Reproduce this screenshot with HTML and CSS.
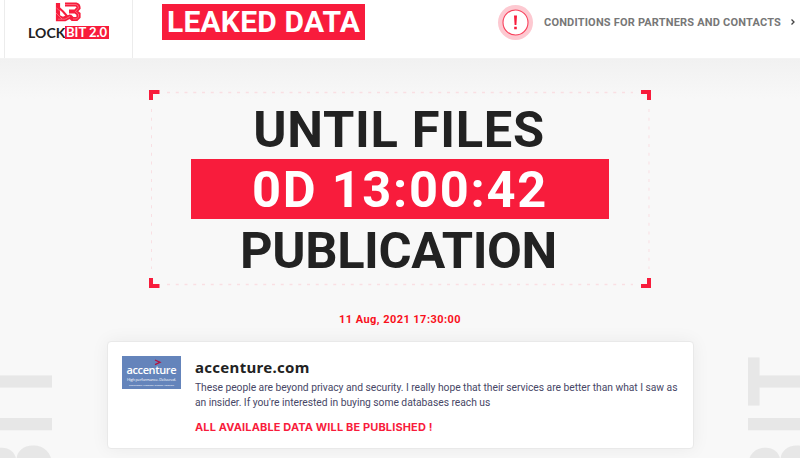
FILE: index.html
```html
<!DOCTYPE html>
<html lang="en">
<head>
<meta charset="utf-8">
<title>Leaked data</title>
<link rel="stylesheet" href="styles.css">
</head>
<body>
<header class="header">
  <div class="brand">
    <svg class="mark" width="27" height="21" viewBox="0 0 27 21">
      <path d="M3 2V18.200H10L16 15M10 3.500H21Q23.500 4 23.500 7L20.500 10.500L23.500 13V16L21.500 18H17.500L14.500 15M14 10.500H20.500" fill="none" stroke="#f81c3c" stroke-width="4.200"/>
      <path d="M2 5L8 10.500L12 15L8 17L4 15" fill="none" stroke="#f81c3c" stroke-width="2"/>
      <path d="M1.500 7L6 11M1 12L7 18M3 18.200H10L15 15.500M10 3.500H21Q23.500 4 23.500 7L20.500 10.500L23.500 13V16L21.500 18H18" fill="none" stroke="#fff" stroke-opacity=".45" stroke-width=".7"/>
    </svg>
    <div class="wordmark"><span class="lock">LOCK</span><span class="bit">BIT 2.0</span></div>
  </div>
  <h1 class="title"><span>LEAKED DATA</span></h1>
  <a class="conditions"><span class="alert"><svg width="27" height="27" viewBox="0 0 27 27"><circle cx="13.5" cy="13.5" r="12.5" fill="#fff" stroke="#f8405b" stroke-width="1.1"/><path d="M12 6.5H15L14.4 16H12.6ZM12.2 17.8H14.8V20.2H12.2Z" fill="#f81c3c"/></svg></span><span class="conditions-text">CONDITIONS FOR PARTNERS AND CONTACTS</span><svg class="chevron" width="4" height="6" viewBox="0 0 4 6"><path d="M.5 .5L3 3L.5 5.5" fill="none" stroke="#444" stroke-width="1.3"/></svg></a>
</header>
<main class="main">
  <svg class="watermark left" width="60" height="110" viewBox="0 0 60 110"><text transform="translate(52 110) rotate(-90) scale(.87 1)" x="-13 39 88" y="0">BIT</text></svg>
  <svg class="watermark right" width="60" height="110" viewBox="0 0 60 110"><text transform="translate(76 110) rotate(-90) scale(.87 1)" x="-13 39 88" y="0">BIT</text></svg>
  <section class="countdown">
    <svg class="frame" width="502" height="197" viewBox="0 0 502 197">
      <path d="M18 2.5H484M18 194.5H484" fill="none" stroke="#f9dfe3" stroke-width="1.4" stroke-dasharray="3 5.75"/>
      <path d="M2.5 19V179M500 19V179" fill="none" stroke="#f9dfe3" stroke-width="1" stroke-dasharray="3 5.75"/>
      <path d="M2 10V2H10.500M492 2H500V10M2 188V196H10.500M492 196H500V188" fill="none" stroke="#f81c3c" stroke-width="4"/>
    </svg>
    <div class="line"><span class="until">UNTIL FILES</span></div>
    <div class="line time"><span class="clock">0D 13:00:42</span></div>
    <div class="line"><span class="publication">PUBLICATION</span></div>
  </section>
  <div class="date"><span>11 Aug, 2021 17:30:00</span></div>
  <article class="card">
    <div class="thumb">
      <svg width="59" height="33" viewBox="0 0 59 33"><path d="M33 4L38 6.300L33 8.600" fill="none" stroke="#b3123e" stroke-width="1.3"/>
      <text class="thumb-name" x="4.500" y="18" textLength="50">accenture</text>
      <text class="thumb-tag" x="5" y="24.500" textLength="49">High performance. Delivered.</text>
      <text class="thumb-note" x="7" y="30" textLength="45">Designation: Customer Support Associate</text></svg>
    </div>
    <div class="copy">
      <h2><span>accenture.com</span></h2>
      <p><span class="copy-one">These people are beyond privacy and security. I really hope that their services are better than what I saw as</span><br><span class="copy-two">an insider. If you're interested in buying some databases reach us</span></p>
      <strong><span>ALL AVAILABLE DATA WILL BE PUBLISHED !</span></strong>
    </div>
  </article>
</main>
</body>
</html>
```
FILE: styles.css
```css
* { box-sizing: border-box; }
body { margin: 0; width: 800px; height: 458px; overflow: hidden; background: #f8f8f8; font-family: Roboto, sans-serif; color: #222; }
h1, h2, p { margin: 0; }
.header { height: 59px; background: #fff; display: flex; border-bottom: 1px solid #f3f3f3; white-space: nowrap; }
.brand { width: 129px; margin-left: 4px; border-left: 1px solid #ececec; border-right: 1px solid #ececec; padding-top: 1px; display: flex; flex-direction: column; align-items: center; }
.mark { display: block; }
.wordmark { margin-top: 4px; display: flex; height: 14px; line-height: 14px; font-family: Lato, sans-serif; font-weight: 700; font-size: 14px; }
.lock { width: 37px; letter-spacing: .1px; }
.bit { width: 44px; height: 13px; line-height: 13px; padding-left: 1px; background: #f81c3c; color: #fff; font-size: 13px; }
.title { margin: 4px 0 0 29px; width: 203px; height: 36px; background: #f81c3c; color: #fff; font-size: 30px; line-height: 36px; padding-left: 5px; font-weight: 700; letter-spacing: .2px; }
.conditions { display: flex; align-items: center; margin-left: 133px; height: 44px; color: #777; font-size: 11px; font-weight: 700; }
.alert { display: flex; align-items: center; justify-content: center; width: 35px; height: 35px; border-radius: 50%; background: #fdc9d1; }
.conditions-text { width: 247px; margin-left: 11px; letter-spacing: .19px; }
.main { position: relative; height: 399px; padding-top: 31px; background: linear-gradient(#f1f1f1 0, #f8f8f8 40px); }
.watermark { position: absolute; bottom: 0; font: 700 93px Inter, sans-serif; fill: #e7e7e7; text-anchor: middle; }
.left { left: 0; }
.right { right: 0; }
.countdown { position: relative; width: 502px; height: 198px; margin: 0 auto; padding: 9px 42px 0; }
.frame { position: absolute; left: 0; top: 0; overflow: visible; }
.line { position: relative; height: 60px; line-height: 62px; text-align: center; font-weight: 700; font-size: 50.6px; white-space: nowrap; }
.until { letter-spacing: .7px; margin-right: 2px; }
.clock { letter-spacing: 1.7px; }
.publication { letter-spacing: -.4px; margin-right: 3px; }
.time { margin-bottom: 1px; background: #f81c3c; color: #fff; }
.date { margin-top: 25px; height: 14px; line-height: 14px; text-align: center; color: #f9111c; font-size: 11px; font-weight: 700; letter-spacing: .45px; }
.card { position: relative; display: flex; width: 587px; height: 108px; margin: 14px 0 0 107px; padding: 14px; background: #fff; border: 1px solid #e9e9e9; border-radius: 4px; box-shadow: 0 0 18px rgba(0, 0, 0, .06); white-space: nowrap; }
.thumb { width: 59px; height: 33px; background: #6484bb; }
.thumb svg { display: block; fill: #fff; font-family: "Open Sans", sans-serif; }
.thumb-name { font-size: 11px; font-weight: 600; }
.thumb-tag { font-size: 4px; }
.thumb-note { font-size: 2.3px; }
.copy { margin-left: 14px; padding-top: 2px; }
.copy h2 { font: 700 15px/18px "Noto Sans", sans-serif; letter-spacing: .3px; }
.copy p { margin-top: 4px; font: 10.3px/15px Roboto, sans-serif; color: #474766; letter-spacing: -.033px; }
.copy strong { display: block; margin-top: 10px; font: 700 11px/15px Inter, sans-serif; color: #f81c3c; letter-spacing: .13px; }
```
